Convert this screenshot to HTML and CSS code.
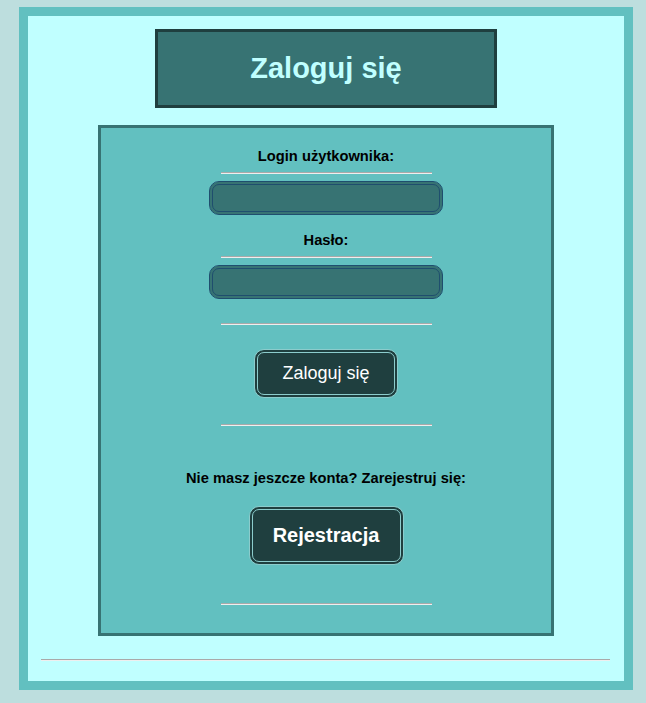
FILE: index.html
```html
<!DOCTYPE html>
<html lang="pl">
<head>
<meta charset="utf-8">
<title>Zaloguj się</title>
<link rel="stylesheet" href="styles.css">
</head>
<body>
<div class="frame">
  <div class="title">Zaloguj się</div>
  <form class="panel">
    <label class="label" for="login">Login użytkownika:</label>
    <hr class="sep">
    <input class="field" id="login" type="text">
    <label class="label label-pass" for="pass">Hasło:</label>
    <hr class="sep">
    <input class="field" id="pass" type="password">
    <hr class="sep sep-submit">
    <button class="btn btn-login" type="button">Zaloguj się</button>
    <hr class="sep sep-after-login">
    <p class="register-text">Nie masz jeszcze konta? Zarejestruj się:</p>
    <button class="btn btn-register" type="button">Rejestracja</button>
    <hr class="sep sep-last">
  </form>
  <hr class="foot">
</div>
</body>
</html>
```

FILE: styles.css
```css
html, body {
  margin: 0;
  padding: 0;
}

body {
  background: #bddede;
  font-family: "Liberation Sans", Arial, sans-serif;
  padding: 7px 13px 13px 19px;
}

.frame {
  border: 9px solid #62c0c0;
  background: #c0ffff;
  padding: 13px 0 20px;
  display: flex;
  flex-direction: column;
  align-items: center;
}

.title {
  width: 336px;
  height: 73px;
  box-sizing: content-box;
  border: 3px solid #1f3f3f;
  background: #377373;
  color: #c0ffff;
  font-size: 29px;
  font-weight: bold;
  line-height: 1;
  display: flex;
  align-items: center;
  justify-content: center;
  padding: 0;
}

.panel {
  margin: 17px 0 0;
  width: 450px;
  border: 3px solid #377373;
  background: #62c0c0;
  padding: 20px 0 28px;
  display: flex;
  flex-direction: column;
  align-items: center;
}

.label {
  display: block;
  font-size: 14.7px;
  font-weight: bold;
  line-height: 16px;
  height: 16px;
  color: #000;
}

.label-pass {
  margin-top: 17px;
}

.sep {
  width: 211px;
  height: 0;
  margin: 8px 0 7px;
  border: 0;
  border-top: 1px solid #a9a9a9;
  border-bottom: 1px solid #eeeeee;
}

.field {
  box-sizing: border-box;
  width: 234px;
  height: 34px;
  margin: 0;
  border: 4px double #1f4e6e;
  border-radius: 10px;
  background: #377373;
  color: #fff;
  padding: 0 8px;
  font-family: inherit;
  font-size: 14px;
  outline: none;
}

.sep-submit {
  margin: 24px 0 24px;
}

.sep-after-login {
  margin: 26px 0 0;
}

.sep-last {
  margin: 38px 0 0;
}

.btn {
  box-sizing: border-box;
  border: 4px double #8ccccc;
  border-radius: 10px;
  background: #1f3f3f;
  color: #ffffff;
  font-family: inherit;
  display: flex;
  align-items: center;
  justify-content: center;
  padding: 0;
  cursor: pointer;
}

.btn-login {
  width: 144px;
  height: 49px;
  font-size: 18px;
}

.btn-register {
  width: 155px;
  height: 59px;
  font-size: 20px;
  font-weight: bold;
}

.register-text {
  margin: 44px 0 20px;
  font-size: 14.7px;
  font-weight: bold;
  line-height: 16px;
  color: #000;
}

.foot {
  align-self: stretch;
  margin: 23px 14px 0 13px;
  height: 0;
  border: 0;
  border-top: 1px solid #a9a9a9;
  border-bottom: 1px solid #eeeeee;
}
```
